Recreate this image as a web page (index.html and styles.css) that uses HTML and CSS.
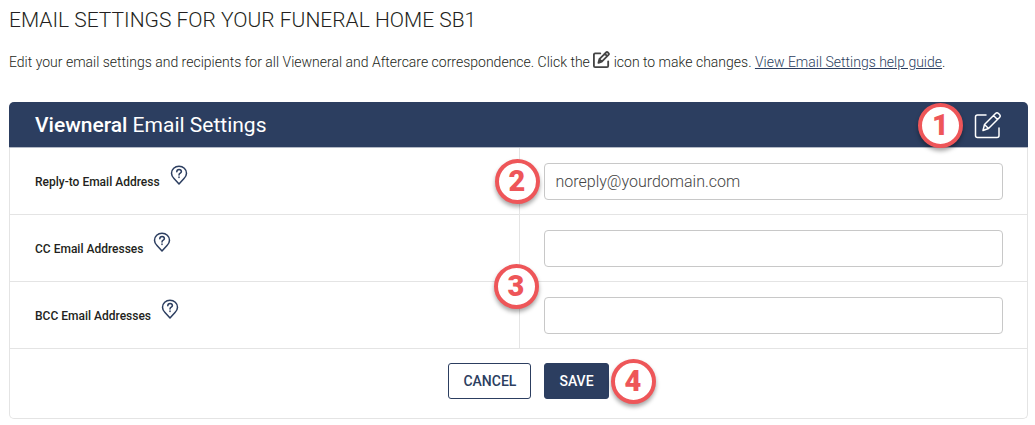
FILE: index.html
```
<!DOCTYPE html>

<html lang="en">

<head>
  <meta charset="UTF-8">
  <meta name="viewport" content="width=device-width, initial-scale=1">

  <title>Email Settings</title>

  <link rel="stylesheet" href="styles.css">
</head>

<body>
  <svg class="sprite" aria-hidden="true">
    <symbol id="icon-edit" viewBox="0 0 28 28">
      <path d="M12 4H3.5Q1.5 4 1.5 6v18.500q0 2 2 2H23q2 0 2-2V17" />
      <path d="M9 19.500l1.500-6L21.500 2.500q1.500-1.500 3 0l1 1q1.500 1.500 0 3L14.500 17.500zM10.500 13.500l4 4M19.500 4.500l4 4" />
    </symbol>
    <symbol id="icon-help" viewBox="0 0 18 20">
      <path d="M9 19L4 13.500C2.500 12 1.500 10 1.500 8.200a7.500 7 0 0 1 15 0C16.500 10 15.500 12 14 13.500z" />
      <path d="M6.800 6.800c0-3 4.600-3 4.600 0C11.400 8.300 9 8.200 9 10M9 12v.5" />
    </symbol>
  </svg>

  <h1>Email Settings for Your Funeral Home SB1</h1>

  <p class="intro">
    Edit your email settings and recipients for all Viewneral and Aftercare correspondence. Click the
    <svg class="intro-icon"><use href="#icon-edit" /></svg>
    icon to make changes. <a href="#">View Email Settings help guide</a>.
  </p>

  <form class="panel">
    <div class="panel-header">
      <h2><strong>Viewneral</strong> Email Settings</h2>
      <button class="edit" type="button" aria-label="Edit">
        <svg><use href="#icon-edit" /></svg>
      </button>
      <span class="step step-edit">1</span>
    </div>

    <div class="row">
      <div class="label">
        <label for="reply_to">Reply-to Email Address</label>
        <svg class="help"><use href="#icon-help" /></svg>
      </div>
      <div class="field">
        <input id="reply_to" name="reply_to" type="text" value="noreply@yourdomain.com">
        <span class="step step-reply">2</span>
      </div>
    </div>
    <div class="row">
      <div class="label">
        <label for="cc">CC Email Addresses</label>
        <svg class="help"><use href="#icon-help" /></svg>
      </div>
      <div class="field">
        <input id="cc" name="cc" type="text">
        <span class="step step-copies">3</span>
      </div>
    </div>
    <div class="row">
      <div class="label">
        <label for="bcc">BCC Email Addresses</label>
        <svg class="help"><use href="#icon-help" /></svg>
      </div>
      <div class="field">
        <input id="bcc" name="bcc" type="text">
      </div>
    </div>

    <div class="actions">
      <button class="button" type="button">CANCEL</button>
      <button class="button primary" type="submit">SAVE</button>
      <span class="step step-save">4</span>
    </div>
  </form>
</body>

</html>
```
FILE: styles.css
```
:root {
  --navy: #2c3e60;
  --line: #e4e4e4;
  --red: #ee5659;
}

* {
  box-sizing: border-box;
}

body {
  margin: 0;
  padding: 6px 7px 6px 9px;
  font-family: Roboto, sans-serif;
  font-size: 14px;
  font-weight: 300;
  color: #231f20;
  background: #fff;
}

svg {
  fill: none;
  stroke: currentColor;
  stroke-linecap: round;
  stroke-linejoin: round;
}

.sprite {
  position: absolute;
  width: 0;
  height: 0;
}

h1 {
  margin: 0;
  font-size: 21px;
  line-height: 28px;
  font-weight: 300;
  text-transform: uppercase;
}

.intro {
  margin: 16px 0 28px;
  line-height: 24px;

  a {
    color: var(--navy);
  }
}

.intro-icon {
  width: 17px;
  height: 17px;
  vertical-align: -1px;
  color: #444;
  stroke-width: 3;
}

.panel {
  border: 1px solid var(--line);
  border-top: 0;
  border-radius: 5px;
}

.panel-header {
  position: relative;
  display: flex;
  align-items: center;
  justify-content: space-between;
  height: 46px;
  margin: 0 -1px;
  padding: 0 26px;
  border-bottom: 1px solid #b4bac6;
  border-radius: 5px 5px 0 0;
  background: var(--navy);
  background-clip: padding-box;
  color: #fff;

  h2 {
    margin: 0;
    font-size: 21px;
    font-weight: 400;
  }

  strong {
    font-weight: 500;
  }
}

.edit {
  display: flex;
  padding: 0;
  border: 0;
  background: none;
  color: #fff;

  svg {
    width: 28px;
    height: 28px;
    stroke-width: 1.5;
  }
}

.row {
  display: grid;
  grid-template-columns: 1fr 1fr;
  border-bottom: 1px solid var(--line);
}

.label {
  display: flex;
  align-items: center;
  gap: 10px;
  padding: 2px 0 0 25px;

  label {
    font-size: 12px;
    font-weight: 500;
  }
}

.help {
  width: 18px;
  height: 20px;
  margin-bottom: 14px;
  color: var(--navy);
  stroke-width: 1.5;
}

.field {
  position: relative;
  padding: 15px 24px 14px;
  border-left: 1px solid var(--line);

  input {
    display: block;
    width: 100%;
    height: 37px;
    padding: 0 11px;
    border: 1px solid #c8c8c8;
    border-radius: 4px;
    font: inherit;
    font-size: 16px;
    color: #444;
  }
}

.actions {
  position: relative;
  display: flex;
  justify-content: center;
  gap: 13px;
  padding: 14px 0 19px 20px;
}

.button {
  height: 36px;
  padding: 0 14px;
  border: 1px solid var(--navy);
  border-radius: 3px;
  font: inherit;
  font-weight: 500;
  color: var(--navy);
  background: #fff;
}

.primary {
  color: #fff;
  background: var(--navy);
}

/* numbered callouts */
.step {
  position: absolute;
  z-index: 1;
  width: 45px;
  height: 45px;
  border: 4px solid var(--red);
  border-radius: 50%;
  background: #fff;
  box-shadow: 0 3px 4px rgba(0, 0, 0, 0.35);
  color: var(--red);
  font-size: 29px;
  line-height: 37px;
  font-weight: 900;
  text-align: center;
}

.step-edit {
  top: 1px;
  right: 65px;
}

.step-reply {
  top: 11px;
  left: -25px;
}

.step-copies {
  top: 49px;
  left: -26px;
}

.step-save {
  top: 10px;
  left: calc(50% + 92px);
}
```
